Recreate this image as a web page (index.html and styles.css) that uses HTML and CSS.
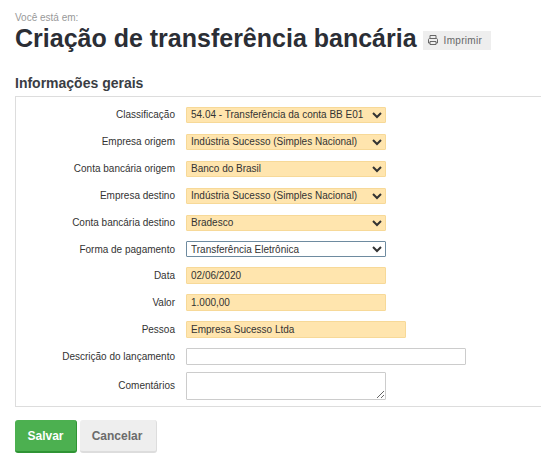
FILE: index.html
```html
<!DOCTYPE html>
<html lang="pt-BR">
<head>
    <meta charset="UTF-8">
    <meta name="viewport" content="width=device-width, initial-scale=1.0">
    <title>Criação de transferência bancária</title>
    <link rel="stylesheet" href="styles.css">
</head>
<body>
    <div class="page">
        <div class="breadcrumb">Você está em:</div>
        <div class="title-row">
            <h1 class="page-title">Criação de transferência bancária</h1>
            <a class="print-btn" href="#">
                <svg class="print-icon" width="12" height="12" viewBox="0 0 12 12" fill="none" stroke="#666" stroke-width="1">
                    <path d="M3 4.5V1.5H9V4.5"/>
                    <path d="M3 9H1.5V5.5C1.5 5 2 4.5 2.5 4.5H9.5C10 4.5 10.5 5 10.5 5.5V9H9"/>
                    <path d="M3 7.5H9V10.5H3Z"/>
                </svg>
                Imprimir
            </a>
        </div>

        <h2 class="section-title">Informações gerais</h2>
        <form class="form-box">
            <div class="form-row">
                <label class="form-label">Classificação</label>
                <select class="field field-select required">
                    <option>54.04 - Transferência da conta BB E01</option>
                </select>
            </div>
            <div class="form-row">
                <label class="form-label">Empresa origem</label>
                <select class="field field-select required">
                    <option>Indústria Sucesso (Simples Nacional)</option>
                </select>
            </div>
            <div class="form-row">
                <label class="form-label">Conta bancária origem</label>
                <select class="field field-select required">
                    <option>Banco do Brasil</option>
                </select>
            </div>
            <div class="form-row">
                <label class="form-label">Empresa destino</label>
                <select class="field field-select required">
                    <option>Indústria Sucesso (Simples Nacional)</option>
                </select>
            </div>
            <div class="form-row">
                <label class="form-label">Conta bancária destino</label>
                <select class="field field-select required">
                    <option>Bradesco</option>
                </select>
            </div>
            <div class="form-row form-row-short">
                <label class="form-label">Forma de pagamento</label>
                <select class="field field-select focused">
                    <option>Transferência Eletrônica</option>
                </select>
            </div>
            <div class="form-row">
                <label class="form-label">Data</label>
                <input class="field field-input required" type="text" value="02/06/2020">
            </div>
            <div class="form-row">
                <label class="form-label">Valor</label>
                <input class="field field-input required" type="text" value="1.000,00">
            </div>
            <div class="form-row">
                <label class="form-label">Pessoa</label>
                <input class="field field-input field-medium required" type="text" value="Empresa Sucesso Ltda">
            </div>
            <div class="form-row">
                <label class="form-label">Descrição do lançamento</label>
                <input class="field field-input field-long" type="text">
            </div>
            <div class="form-row form-row-last">
                <label class="form-label">Comentários</label>
                <textarea class="field field-area"></textarea>
            </div>
        </form>

        <div class="actions">
            <button class="btn btn-save" type="button">Salvar</button>
            <button class="btn btn-cancel" type="button">Cancelar</button>
        </div>
    </div>
</body>
</html>
```

FILE: styles.css
```css
html, body {
    overflow: hidden;
}

body {
    margin: 0;
    background-color: #fff;
    font-family: "Liberation Sans", Arial, sans-serif;
    font-size: 10px;
    color: #333;
}

.page {
    width: 560px;
    padding: 12px 0 0 15px;
}

.breadcrumb {
    font-size: 10px;
    line-height: 11px;
    color: #999;
}

.title-row {
    display: flex;
    align-items: center;
    margin-top: 1px;
}

.page-title {
    margin: 0;
    font-size: 25px;
    line-height: 29px;
    font-weight: bold;
    color: #2b2e35;
}

.print-btn {
    display: flex;
    align-items: center;
    gap: 5px;
    height: 19px;
    margin: 3px 0 0 6px;
    padding: 0 9px 0 4px;
    background-color: #eee;
    color: #666;
    font-size: 10px;
    letter-spacing: 0.3px;
    text-decoration: none;
}

.section-title {
    margin: 22px 0 0;
    font-size: 14px;
    line-height: 16px;
    font-weight: bold;
    color: #3a3d44;
}

.form-box {
    box-sizing: border-box;
    height: 311px;
    margin-top: 5px;
    padding: 4px 0 0;
    border: 1px solid #ddd;
}

.form-row {
    display: flex;
    align-items: center;
    height: 27px;
}

.form-row-short {
    height: 26px;
}

.form-row-last {
    align-items: flex-start;
    height: 30px;
    padding-top: 2px;
}

.form-label {
    box-sizing: border-box;
    width: 159px;
    margin-right: 11px;
    text-align: right;
    font-size: 10px;
    color: #333;
}

.form-row-last .form-label {
    margin-top: 8px;
}

.field {
    box-sizing: border-box;
    margin: 0;
    border: 1px solid #ccc;
    background-color: #fff;
    font-family: "Liberation Sans", Arial, sans-serif;
    font-size: 10px;
    color: #333;
    border-radius: 1px;
}

.field-select {
    width: 200px;
    height: 16px;
    padding: 0;
}

.field-input {
    width: 200px;
    height: 17px;
    padding: 0 4px;
}

.field-medium {
    width: 220px;
}

.field-long {
    width: 280px;
}

.field-area {
    display: block;
    width: 200px;
    height: 28px;
    padding: 2px 4px;
}

.required {
    background-color: #ffe5ae;
    border-color: #f7d998;
}

.focused {
    border-color: #6e8ba0;
}

.actions {
    display: flex;
    gap: 3px;
    margin-top: 13px;
}

.btn {
    height: 33px;
    border: 0;
    border-radius: 3px;
    font-family: "Liberation Sans", Arial, sans-serif;
    font-size: 12px;
    font-weight: bold;
}

.btn-save {
    width: 62px;
    background-color: #4cb050;
    color: #fff;
    border-right: 1px solid #2f9434;
    border-bottom: 2px solid #2f9434;
}

.btn-cancel {
    width: 77px;
    padding: 0 6px 0 4px;
    background-color: #eee;
    color: #6b6b6b;
    border-right: 1px solid #ddd;
    border-bottom: 2px solid #ddd;
}
```
